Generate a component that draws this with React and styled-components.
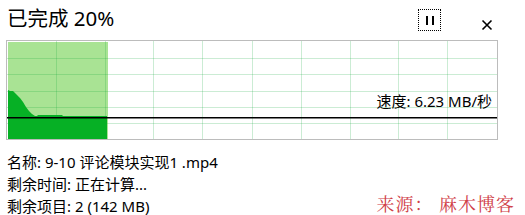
import React from 'react';
import styled, { createGlobalStyle } from 'styled-components';

const GlobalStyle = createGlobalStyle`
  html, body {
    margin: 0;
    padding: 0;
    background: #fff;
  }
  body {
    font-family: 'Noto Sans', 'Noto Sans CJK SC', sans-serif;
    color: #000;
  }
`;

const Window = styled.div`
  position: relative;
  width: 525px;
  height: 215px;
  overflow: hidden;
  background: #fff;
`;

const Header = styled.div`
  display: flex;
  align-items: center;
  height: 39px;
  padding: 0 0 0 7px;
`;

const Title = styled.div`
  font-size: 20.5px;
  line-height: 24px;
  margin-top: -4px;
  flex: 1;
`;

const PauseButton = styled.div`
  display: flex;
  align-items: center;
  justify-content: center;
  gap: 4px;
  box-sizing: border-box;
  width: 23px;
  height: 22px;
  border: 1.5px dotted #000;
  margin-right: 40px;
  margin-top: 1px;
`;

const Bar = styled.div`
  width: 2px;
  height: 9px;
  background: #000;
`;

const CloseButton = styled.div`
  width: 12px;
  height: 12px;
  margin-right: 32px;
  margin-top: 1px;
`;

const Graph = styled.div`
  position: relative;
  margin-left: 6px;
  width: 490px;
  height: 98px;
  border: 1px solid #bcbcbc;
  margin-top: 1px;
`;

const Speed = styled.div`
  position: absolute;
  right: 5px;
  top: 51px;
  font-size: 15px;
  line-height: 19px;
`;

const Info = styled.div`
  display: flex;
  flex-direction: column;
  padding: 11px 0 0 7px;
  font-size: 15px;
  line-height: 22px;
`;

const Source = styled.div`
  position: absolute;
  right: 10px;
  bottom: 1px;
  font-family: 'Noto Serif CJK SC', 'Liberation Serif', serif;
  font-size: 18px;
  line-height: 22px;
  color: #d04048;
  letter-spacing: 1px;
`;

const cols = [49, 98, 146, 195, 245, 294, 343, 391, 440];
const rows = [17, 33, 50, 66, 82];

function Chart() {
  return (
    <svg width="490" height="98" viewBox="0 0 490 98" style={{ display: 'block' }}>
      <rect x="1" y="1" width="100" height="97" fill="#a9e394" />
      {cols.map((x) => (
        <line key={'c' + x} x1={x + 0.5} y1="0" x2={x + 0.5} y2="98" stroke="rgba(20,170,60,0.22)" strokeWidth="1" />
      ))}
      {rows.map((y) => (
        <line key={'r' + y} x1="0" y1={y + 0.5} x2="490" y2={y + 0.5} stroke="rgba(20,170,60,0.22)" strokeWidth="1" />
      ))}
      <path
        d="M1,49 L3,50 L6,50 L8,52 L10,54 L13,57 L16,61 L19,66 L22,70 L25,73 L28,75 L30,75 L31,74 L55,74 L56,75 L100,75 L100,98 L1,98 Z"
        fill="#06b025"
      />
      <rect x="0" y="76" width="490" height="1.5" fill="#000" />
    </svg>
  );
}

export default function App() {
  return (
    <Window>
      <GlobalStyle />
      <Header>
        <Title>已完成 20%</Title>
        <PauseButton>
          <Bar />
          <Bar />
        </PauseButton>
        <CloseButton>
          <svg width="12" height="12" viewBox="0 0 12 12">
            <path d="M1.5,1.5 L10.5,10.5 M10.5,1.5 L1.5,10.5" stroke="#000" strokeWidth="1.6" />
          </svg>
        </CloseButton>
      </Header>
      <Graph>
        <Chart />
        <Speed>速度: 6.23 MB/秒</Speed>
      </Graph>
      <Info>
        <div>名称: 9-10 评论模块实现1 .mp4</div>
        <div>剩余时间: 正在计算...</div>
        <div>剩余项目: 2 (142 MB)</div>
      </Info>
      <Source>来源：&nbsp;麻木博客</Source>
    </Window>
  );
}
